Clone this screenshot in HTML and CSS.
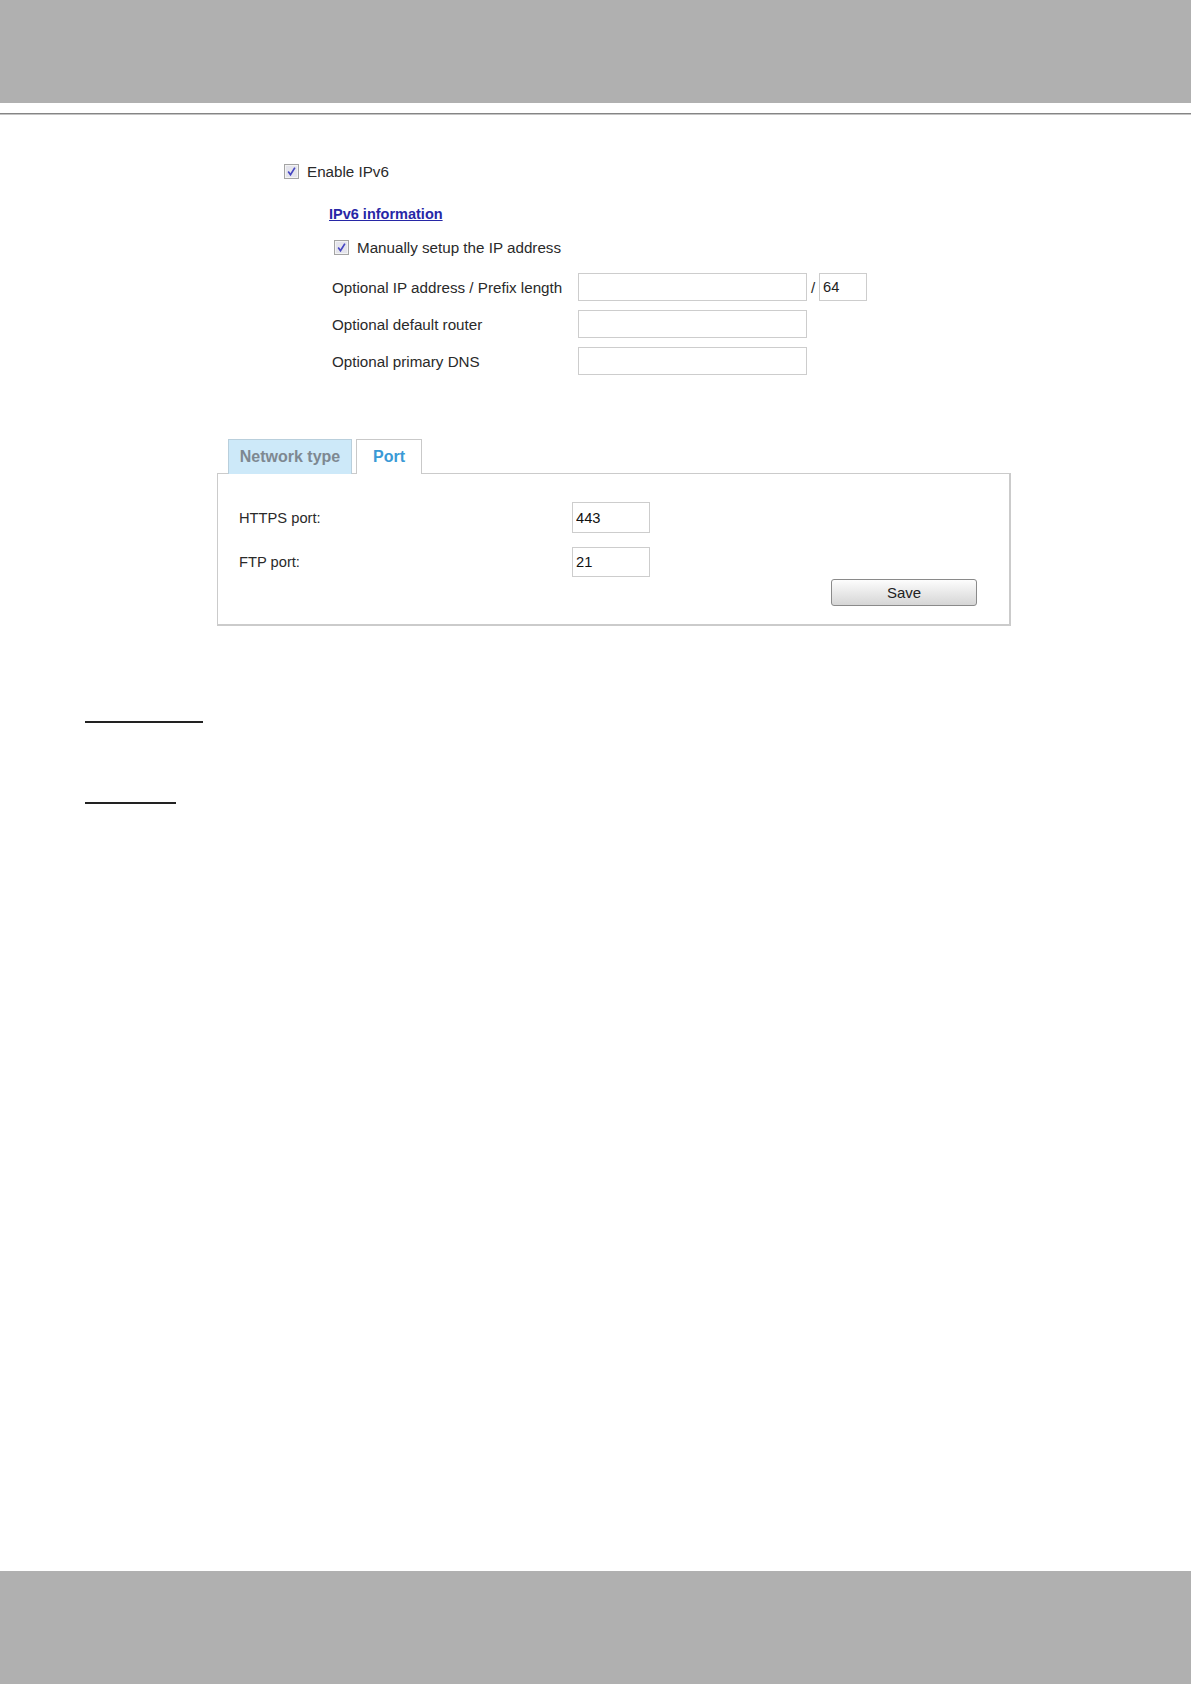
FILE: index.html
```html
<!DOCTYPE html>
<html lang="en">
<head>
  <meta charset="UTF-8" />
  <title>Network - IPv6 / Port</title>
  <link rel="stylesheet" href="styles.css">
</head>
<body>
  <div class="page">
    <header class="top-bar"></header>
    <div class="top-rule"></div>

    <main class="content">
      <section class="ipv6">
        <label class="check-row enable">
          <svg class="check" width="15" height="15" viewBox="0 0 15 15"><rect x="0.5" y="0.5" width="14" height="14" fill="#f3f3f3" stroke="#a4a4a4"/><rect x="2" y="2" width="11" height="11" fill="#e4e4ec"/><path d="M4.2 7.6l2.3 3.1L10.9 3.6" fill="none" stroke="#4646c2" stroke-width="1.7"/></svg>
          Enable IPv6
        </label>

        <a class="info-link" href="#">IPv6 information</a>

        <label class="check-row manual">
          <svg class="check" width="15" height="15" viewBox="0 0 15 15"><rect x="0.5" y="0.5" width="14" height="14" fill="#f3f3f3" stroke="#a4a4a4"/><rect x="2" y="2" width="11" height="11" fill="#e4e4ec"/><path d="M4.2 7.6l2.3 3.1L10.9 3.6" fill="none" stroke="#4646c2" stroke-width="1.7"/></svg>
          Manually setup the IP address
        </label>

        <div class="field-row">
          <span class="field-label">Optional IP address / Prefix length</span>
          <input class="text-in wide" type="text" />
          <span class="slash">/</span>
          <input class="text-in prefix" type="text" value="64" />
        </div>
        <div class="field-row">
          <span class="field-label">Optional default router</span>
          <input class="text-in wide" type="text" />
        </div>
        <div class="field-row">
          <span class="field-label">Optional primary DNS</span>
          <input class="text-in wide" type="text" />
        </div>
      </section>

      <section class="port-box">
        <div class="tabs">
          <span class="tab tab-network">Network type</span>
          <span class="tab tab-port">Port</span>
        </div>
        <div class="panel">
          <div class="port-row">
            <span class="port-label">HTTPS port:</span>
            <input class="port-in https" type="text" value="443" />
          </div>
          <div class="port-row">
            <span class="port-label">FTP port:</span>
            <input class="port-in" type="text" value="21" />
          </div>
          <div class="panel-actions">
            <button class="save-btn">Save</button>
          </div>
        </div>
      </section>

      <div class="blank-heading first"></div>
      <div class="blank-heading second"></div>
    </main>

    <footer class="bottom-bar"></footer>
  </div>
</body>
</html>
```

FILE: styles.css
```css
body {
  margin: 0;
  font-family: "Liberation Sans", Arial, sans-serif;
  font-size: 14.7px;
  color: #2a2a2a;
  background: white;
}
.page {
  height: 1684px;
  display: flex;
  flex-direction: column;
}
.top-bar {
  height: 103px;
  background: #b0b0b0;
}
.top-rule {
  margin-top: 10px;
  height: 1px;
  background: #858585;
  border-bottom: 1px solid #c4c4c4;
}
.content {
  flex: 1;
}

/* ipv6 block */
.ipv6 {
  padding-left: 284px;
  font-size: 15.2px;
}
.check-row {
  display: flex;
  align-items: center;
  gap: 8px;
  height: 17px;
  line-height: 17px;
}
.check {
  display: block;
}
.enable {
  margin-top: 48px;
}
.info-link {
  display: block;
  margin-top: 26px;
  margin-left: 45px;
  width: max-content;
  font-weight: bold;
  font-size: 14.5px;
  line-height: 17px;
  color: #2727a6;
}
.manual {
  margin-top: 16px;
  margin-left: 50px;
}
.field-row {
  display: flex;
  align-items: center;
  height: 28px;
  margin-left: 48px;
  margin-bottom: 9px;
}
.manual + .field-row {
  margin-top: 17px;
}
.field-label {
  width: 246px;
}
.text-in {
  box-sizing: border-box;
  height: 28px;
  border: 1px solid #cdcdcd;
  padding: 0 3px;
  font-family: inherit;
  font-size: 14.7px;
  color: #222;
  background: white;
}
.text-in.wide {
  width: 229px;
}
.text-in.prefix {
  width: 48px;
}
.slash {
  width: 12px;
  text-align: center;
}

/* port tabs */
.port-box {
  margin-top: 64px;
  margin-left: 217px;
  width: 794px;
}
.tabs {
  display: flex;
  gap: 4px;
  padding-left: 11px;
}
.tab {
  box-sizing: border-box;
  height: 35px;
  margin-bottom: -1px;
  display: flex;
  align-items: center;
  justify-content: center;
  font-weight: bold;
  font-size: 16px;
  border: 1px solid #c9c9c9;
  border-bottom: none;
}
.tab-network {
  width: 124px;
  background: #cde9f9;
  border-color: #b9cfdc;
  color: #7e8891;
}
.tab-port {
  width: 66px;
  background: white;
  color: #3a9ad6;
}
.panel {
  border: 1px solid #cbcbcb;
  border-width: 1px 2px 2px 1px;
  padding: 28px 32px 18px 21px;
}
.port-row {
  display: flex;
  align-items: center;
  height: 31px;
  margin-bottom: 14px;
}
.port-row + .port-row {
  height: 30px;
  margin-bottom: 2px;
}
.port-label {
  width: 333px;
}
.port-in {
  box-sizing: border-box;
  width: 78px;
  height: 100%;
  border: 1px solid #cdcdcd;
  padding: 0 3px;
  font-family: inherit;
  font-size: 14.7px;
  color: #111;
}
.panel-actions {
  display: flex;
  justify-content: flex-end;
}
.save-btn {
  width: 146px;
  height: 27px;
  border: 1px solid #8a8a8a;
  border-radius: 3px;
  background: linear-gradient(#fdfdfd, #e9e9e9 50%, #d6d6d6);
  font-family: inherit;
  font-size: 15px;
  color: #222;
}

/* empty underlined headings */
.blank-heading {
  height: 2px;
  background: #222;
  margin-left: 85px;
}
.blank-heading.first {
  width: 118px;
  margin-top: 95px;
}
.blank-heading.second {
  width: 91px;
  margin-top: 79px;
}

.bottom-bar {
  height: 113px;
  background: #b0b0b0;
}
```
